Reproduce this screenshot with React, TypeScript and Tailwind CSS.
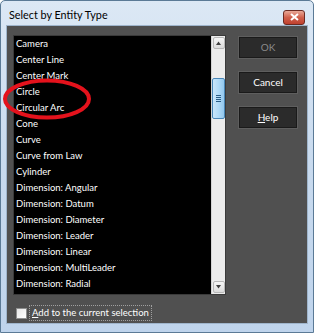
import React from "react";

const items = [
  "Camera",
  "Center Line",
  "Center Mark",
  "Circle",
  "Circular Arc",
  "Cone",
  "Curve",
  "Curve from Law",
  "Cylinder",
  "Dimension: Angular",
  "Dimension: Datum",
  "Dimension: Diameter",
  "Dimension: Leader",
  "Dimension: Linear",
  "Dimension: MultiLeader",
  "Dimension: Radial",
];

function Btn({ label, disabled, u }: { label: string; disabled?: boolean; u?: boolean }) {
  return (
    <div className="w-[58px] h-[21px] border border-[#1a1a1a] bg-[#2b2b2b] shadow-[0_0_0_1px_#5e5e5e] flex items-center justify-center text-[10px]">
      <span className={disabled ? "text-[#8a8a8a]" : "text-white"}>
        {u ? (
          <>
            <span className="underline">{label[0]}</span>
            {label.slice(1)}
          </>
        ) : (
          label
        )}
      </span>
    </div>
  );
}

export default function App() {
  return (
    <div
      className="relative w-[314px] h-[333px] overflow-hidden bg-white text-[9.5px]"
      style={{ fontFamily: 'Lato, "Noto Sans", sans-serif' }}
    >
      <div className="w-[314px] h-[333px] flex flex-col border border-[#5b7a96] rounded-t-[5px] bg-gradient-to-b from-[#dce8f5] via-[#c8daee] to-[#bfd4ec]">
        {/* title bar */}
        <div className="h-[24px] flex items-center justify-between pl-[8px] pr-[8px] shrink-0">
          <span className="text-[10.8px] text-black leading-none pt-[5px]">Select by Entity Type</span>
          <div className="mt-[8px] w-[22px] h-[15px] rounded-[3px] border border-[#6b2a22] bg-gradient-to-b from-[#e8a898] via-[#d0604c] to-[#c0402e] flex items-center justify-center">
            <svg width="9" height="8" viewBox="0 0 9 8">
              <path d="M1 1 L8 7 M8 1 L1 7" stroke="#ffffff" strokeWidth="2" />
            </svg>
          </div>
        </div>
        {/* client */}
        <div className="mx-[5px] h-[299px] border border-[#9fb5cc] bg-[#505050] flex flex-col shrink-0">
          <div className="flex pt-[9px] pl-[6px] pr-[8px]">
            {/* list */}
            <div className="w-[213px] h-[260px] bg-black flex border border-[#3a3a3a]">
              <div className="flex-1 flex flex-col pl-[2px] text-white">
                {items.map((t) => (
                  <div key={t} className="h-[16px] leading-[16px] whitespace-nowrap">
                    {t}
                  </div>
                ))}
              </div>
              <div className="w-[14px] h-full bg-[#ececec] border-l border-[#d4d4d4] flex flex-col items-center py-[1px]">
                <div className="w-[12px] h-[12px] border border-[#b8b8b8] rounded-[2px] bg-gradient-to-b from-[#f6f6f6] to-[#dcdcdc] flex items-center justify-center">
                  <svg width="5" height="4" viewBox="0 0 5 4">
                    <path d="M0 4 L2.5 0.5 L5 4 Z" fill="#404040" />
                  </svg>
                </div>
                <div className="mt-[29px] w-[13px] h-[41px] border border-[#4a87b8] rounded-[2px] bg-gradient-to-r from-[#c9e6fa] via-[#b0daf7] to-[#92c8ef] flex flex-col items-center justify-center gap-[1px]">
                  <div className="w-[5px] h-[1px] bg-[#2a5d86]" />
                  <div className="w-[5px] h-[1px] bg-[#2a5d86]" />
                  <div className="w-[5px] h-[1px] bg-[#2a5d86]" />
                  <div className="w-[5px] h-[1px] bg-[#2a5d86]" />
                </div>
                <div className="flex-1" />
                <div className="w-[12px] h-[12px] border border-[#b8b8b8] rounded-[2px] bg-gradient-to-b from-[#f6f6f6] to-[#dcdcdc] flex items-center justify-center">
                  <svg width="5" height="4" viewBox="0 0 5 4">
                    <path d="M0 0 L5 0 L2.5 3.5 Z" fill="#404040" />
                  </svg>
                </div>
              </div>
            </div>
            {/* buttons */}
            <div className="ml-[13px] pt-[2px] flex flex-col gap-[14px]">
              <Btn label="OK" disabled />
              <Btn label="Cancel" />
              <Btn label="Help" u />
            </div>
          </div>
          <div className="flex items-center mt-[10px] pl-[9px]">
            <div className="w-[11px] h-[11px] border border-[#8e8f8f] bg-gradient-to-br from-[#e6e6e6] to-[#ffffff]" />
            <div className="ml-[2px] px-[2px] border border-dotted border-[#a0a0a0] text-white leading-[14px]">
              <span className="underline">A</span>dd to the current selection
            </div>
          </div>
        </div>
      </div>
      {/* red annotation ellipse */}
      <svg className="absolute left-0 top-0 pointer-events-none" width="314" height="333">
        <ellipse cx="47" cy="99" rx="42" ry="18.5" fill="none" stroke="#e4121c" strokeWidth="4" />
      </svg>
    </div>
  );
}
